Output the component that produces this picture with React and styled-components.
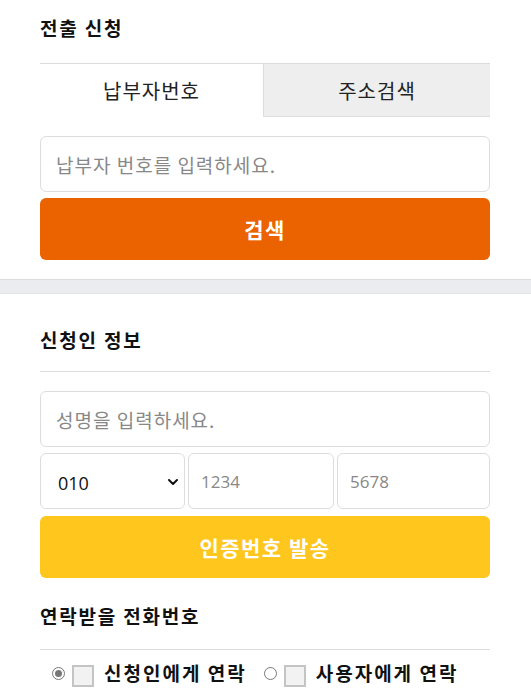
import styled, { createGlobalStyle } from 'styled-components'
import { ChevronDown } from 'lucide-react'

const GlobalStyle = createGlobalStyle`
   body {
      margin: 0;
      background: #ffffff;
      font-family: 'Noto Sans CJK KR', 'Noto Sans', sans-serif;
      color: #111;
   }
`

const App = () => {
   return (
      <>
         <GlobalStyle />
         <Section>
            <SectionTitle top={15} height={48}>
               전출 신청
            </SectionTitle>
            <Tabs>
               <Tab active>납부자번호</Tab>
               <Tab>주소검색</Tab>
            </Tabs>
            <TextInput placeholder="납부자 번호를 입력하세요." />
            <ActionButton color="#eb6200">검색</ActionButton>
         </Section>
         <Divider />
         <Section>
            <SectionTitle top={33} height={44} bordered>
               신청인 정보
            </SectionTitle>
            <TextInput placeholder="성명을 입력하세요." />
            <PhoneRow>
               <SelectWrap>
                  <Select defaultValue="010">
                     <option>010</option>
                     <option>011</option>
                     <option>016</option>
                  </Select>
                  <ChevronDown size={16} strokeWidth={3} />
               </SelectWrap>
               <PhoneInput placeholder="1234" />
               <PhoneInput placeholder="5678" />
            </PhoneRow>
            <ActionButton color="#ffc61e" top={7}>
               인증번호 발송
            </ActionButton>
            <SectionTitle top={25} height={46} bordered>
               연락받을 전화번호
            </SectionTitle>
            <ChoiceRow>
               <Choice>
                  <Radio checked />
                  <Box />
                  신청인에게 연락
               </Choice>
               <Choice>
                  <Radio />
                  <Box />
                  사용자에게 연락
               </Choice>
            </ChoiceRow>
         </Section>
      </>
   )
}

const Section = styled.div`
   display: flex;
   flex-direction: column;
   padding: 0 41px 0 40px;
`

const SectionTitle = styled.h2`
   margin: 0;
   padding-top: ${(p) => p.top}px;
   height: ${(p) => p.height}px;
   box-sizing: content-box;
   font-size: 19px;
   line-height: 26px;
   letter-spacing: 1.8px;
   font-weight: 700;
   color: #111;
   border-bottom: ${(p) => (p.bordered ? '1px solid #dddddd' : 'none')};
`

const Tabs = styled.div`
   display: grid;
   grid-template-columns: 223px 1fr;
   border-top: 1px solid #dddddd;
   height: 53px;
`

const Tab = styled.div`
   display: flex;
   align-items: center;
   justify-content: center;
   font-size: 20px;
   letter-spacing: 1px;
   color: #222;
   background: ${(p) => (p.active ? '#ffffff' : '#eeeeee')};
   border-left: ${(p) => (p.active ? 'none' : '1px solid #dddddd')};
   border-bottom: ${(p) => (p.active ? 'none' : '1px solid #dddddd')};
`

const TextInput = styled.input`
   margin-top: 19px;
   height: 56px;
   min-width: 0;
   box-sizing: border-box;
   border: 1px solid #dddddd;
   border-radius: 6px;
   padding: 0 15px;
   font-family: inherit;
   font-size: 19px;
   letter-spacing: 1px;
   color: #222;
   outline: none;
   &::placeholder {
      color: #888;
   }
`

const ActionButton = styled.button`
   margin-top: ${(p) => p.top || 6}px;
   height: 62px;
   border: none;
   border-radius: 6px;
   background: ${(p) => p.color};
   color: #ffffff;
   font-family: inherit;
   font-size: 21px;
   letter-spacing: 1.5px;
   font-weight: 700;
`

const Divider = styled.div`
   margin-top: 19px;
   height: 13px;
   background: #ebecf0;
   border-top: 1px solid #dcdde1;
   border-bottom: 1px solid #e3e4e8;
`

const PhoneRow = styled.div`
   margin-top: 6px;
   display: grid;
   grid-template-columns: 145px 146px minmax(0, 1fr);
   gap: 3px;
   height: 56px;
`

const SelectWrap = styled.div`
   position: relative;
   svg {
      position: absolute;
      right: 4px;
      top: 21px;
      color: #111;
      pointer-events: none;
   }
`

const Select = styled.select`
   appearance: none;
   width: 100%;
   height: 100%;
   border: 1px solid #dddddd;
   border-radius: 6px;
   background: #ffffff;
   padding: 4px 0 0 17px;
   font-family: 'Open Sans', 'Noto Sans', sans-serif;
   font-size: 18px;
   color: #111;
   outline: none;
`

const PhoneInput = styled(TextInput)`
   margin-top: 0;
   width: 100%;
   padding: 0 12px;
   font-family: 'Open Sans', 'Noto Sans', sans-serif;
   font-size: 17px;
   letter-spacing: 0;
`

const ChoiceRow = styled.div`
   display: flex;
   gap: 17px;
   padding: 8px 0 0 12px;
`

const Choice = styled.label`
   display: flex;
   align-items: center;
   font-size: 19px;
   letter-spacing: 2px;
   font-weight: 700;
   color: #111;
   line-height: 30px;
`

const Radio = styled.span`
   width: 13px;
   height: 13px;
   box-sizing: border-box;
   border-radius: 50%;
   border: 1px solid #777;
   margin-right: 7px;
   position: relative;
   &::after {
      content: '';
      display: ${(p) => (p.checked ? 'block' : 'none')};
      position: absolute;
      inset: 2px;
      border-radius: 50%;
      background: #777;
   }
`

const Box = styled.span`
   width: 22px;
   height: 22px;
   box-sizing: border-box;
   background: #f2f2f2;
   border: 2px solid #c4c4c4;
   margin: 6px 10px 0 0;
`

export default App
